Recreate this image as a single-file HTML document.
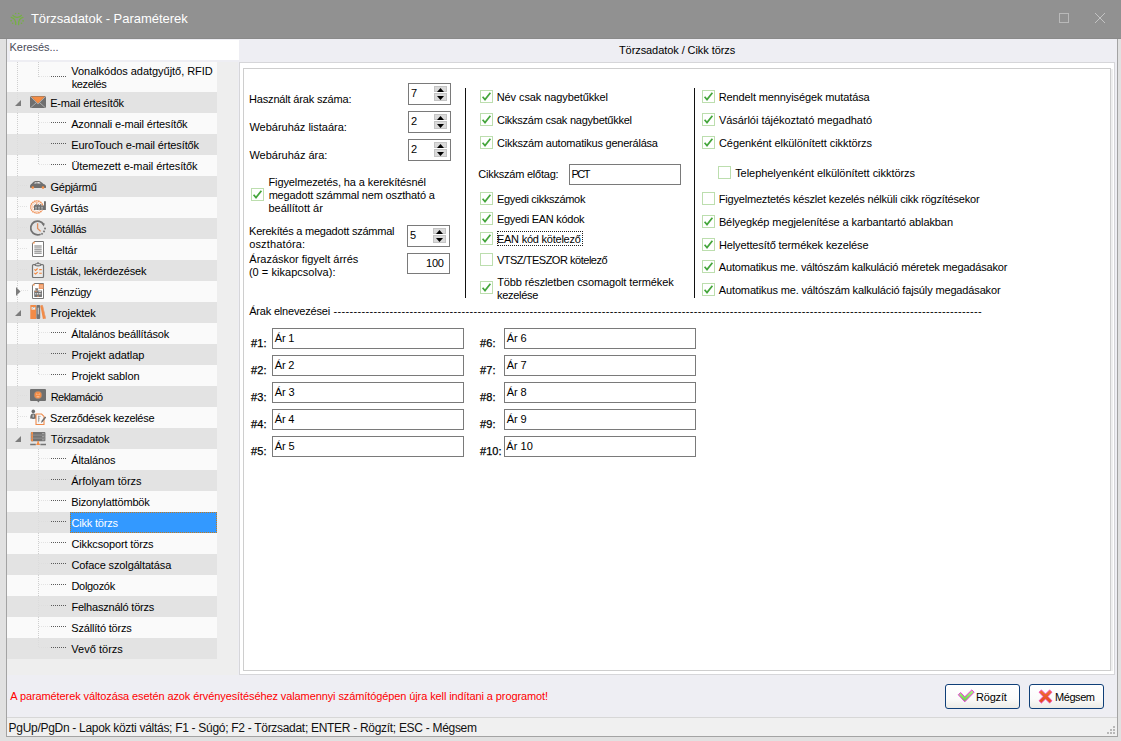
<!DOCTYPE html>
<html lang="hu"><head><meta charset="utf-8"><title>Törzsadatok - Paraméterek</title><style>
html,body{margin:0;padding:0}
body{width:1121px;height:741px;position:relative;overflow:hidden;background:#e1e1e1;font:11px/13px 'Liberation Sans', sans-serif;color:#000}
.a{position:absolute}
.t{white-space:nowrap}
.vd{width:1px;background:repeating-linear-gradient(180deg,var(--c) 0 1px,transparent 1px 2px)}
.hd{height:1px;background:repeating-linear-gradient(90deg,var(--c) 0 1px,transparent 1px 2px)}
</style></head><body>
<div class="a" style="left:0;top:0;width:1121px;height:39px;background:#919191"></div>
<div class="a" style="left:0;top:38px;width:1121px;height:1px;background:#8a8a8a"></div>
<div class="a" style="left:6px;top:39px;width:1112px;height:698px;background:#eeeef3;border:1px solid #a3a3a3;border-top:none;box-sizing:border-box"></div>
<svg class="a" style="left:8px;top:10px" width="18" height="18" viewBox="8 10 18 18"><g fill="none" stroke="#76b043" stroke-width="1.25" stroke-linecap="round"><path d="M12.9 15.3c2 2.6 6.4 2.6 8.5 0"/><path d="M11.2 17.4c3.6 0.8 4.6 3.2 4.5 7.1"/><path d="M23 17.4c-3.6 0.8-4.6 3.2-4.4 7.3"/></g><g fill="#76b043"><circle cx="15.6" cy="13.5" r="0.8"/><circle cx="18.7" cy="13.5" r="0.8"/><circle cx="11.1" cy="20.7" r="0.85"/><circle cx="12.6" cy="23.2" r="0.8"/><circle cx="23.1" cy="20.8" r="0.85"/><circle cx="21.5" cy="23.3" r="0.8"/></g></svg>
<div id="t1" class="a t " style="left:30.88px;top:10px;font-size:13px;line-height:18px;color:#fff;letter-spacing:-0.026px;">Törzsadatok - Paraméterek</div>
<div class="a" style="left:1059px;top:13px;width:10px;height:10px;border:1px solid #b9b9b9;box-sizing:border-box"></div>
<svg class="a" style="left:1095px;top:13px" width="10" height="10" viewBox="0 0 10 10"><path d="M0 0L10 10M10 0L0 10" stroke="#c3c3c3" stroke-width="1"/></svg>
<div class="a" style="left:10px;top:40px;width:229px;height:20px;background:#fff;"></div>
<div id="t2" class="a t " style="left:9.54px;top:41px;color:#4a4a58;letter-spacing:-0.045px;">Keresés...</div>
<div id="t3" class="a t " style="left:618.94px;top:44px;letter-spacing:-0.072px;">Törzsadatok / Cikk törzs</div>
<div class="a" style="left:7px;top:62px;width:231px;height:613px;background:#eeeeee;"></div>
<div class="a" style="left:7px;top:62px;width:210px;height:30px;background:#fafafa;"></div>
<div class="a vd" style="left:17px;top:62px;height:30px;--c:#cfcfcf"></div>
<div class="a vd" style="left:38px;top:62px;height:15px;--c:#cfcfcf"></div>
<div class="a hd" style="left:39px;top:76px;width:11px;--c:#e2e2e2"></div>
<div class="a hd" style="left:51px;top:76px;width:16px;--c:#5a5a5a"></div>
<div id="t4" class="a t " style="left:71.3px;top:65px;letter-spacing:-0.041px;">Vonalkódos adatgyűjtő, RFID</div>
<div id="t5" class="a t " style="left:71.71px;top:78px;letter-spacing:-0.366px;">kezelés</div>
<div class="a" style="left:7px;top:92px;width:210px;height:21px;background:#e3e3e3;"></div>
<div class="a vd" style="left:17px;top:92px;height:21px;--c:#dcdcdc"></div>
<svg class="a" style="left:15px;top:100px" width="6" height="6" viewBox="0 0 6 6"><path d="M6 0V6H0z" fill="#7c7c7c"/></svg>
<svg class="a" style="left:30px;top:94px" width="16" height="16" viewBox="0 0 16 16"><rect x="0" y="2" width="16" height="12" rx="1.5" fill="#6f6f6f"/><path d="M1.1 2.4h13.8L8 9.5z" fill="#f58d45"/><path d="M0.8 2.8l7.2 7.3L15.2 2.8M1 13.4l5.2-4.6M15 13.4l-5.2-4.6" stroke="#b9b9b9" stroke-width="0.8" fill="none"/></svg>
<div id="t6" class="a t " style="left:50.16px;top:97px;letter-spacing:-0.163px;">E-mail értesítők</div>
<div class="a" style="left:7px;top:113px;width:210px;height:21px;background:#fafafa;"></div>
<div class="a vd" style="left:17px;top:113px;height:21px;--c:#cfcfcf"></div>
<div class="a vd" style="left:38px;top:113px;height:21px;--c:#cfcfcf"></div>
<div class="a hd" style="left:39px;top:122px;width:11px;--c:#e2e2e2"></div>
<div class="a hd" style="left:51px;top:122px;width:16px;--c:#5a5a5a"></div>
<div id="t7" class="a t " style="left:71.21px;top:118px;letter-spacing:-0.168px;">Azonnali e-mail értesítők</div>
<div class="a" style="left:7px;top:134px;width:210px;height:21px;background:#e3e3e3;"></div>
<div class="a vd" style="left:17px;top:134px;height:21px;--c:#dcdcdc"></div>
<div class="a vd" style="left:38px;top:134px;height:21px;--c:#dcdcdc"></div>
<div class="a hd" style="left:39px;top:143px;width:11px;--c:#dedede"></div>
<div class="a hd" style="left:51px;top:143px;width:16px;--c:#5a5a5a"></div>
<div id="t8" class="a t " style="left:71.29px;top:139px;letter-spacing:-0.121px;">EuroTouch e-mail értesítők</div>
<div class="a" style="left:7px;top:155px;width:210px;height:21px;background:#fafafa;"></div>
<div class="a vd" style="left:17px;top:155px;height:21px;--c:#cfcfcf"></div>
<div class="a vd" style="left:38px;top:155px;height:10px;--c:#cfcfcf"></div>
<div class="a hd" style="left:39px;top:164px;width:11px;--c:#e2e2e2"></div>
<div class="a hd" style="left:51px;top:164px;width:16px;--c:#5a5a5a"></div>
<div id="t9" class="a t " style="left:71.45px;top:160px;letter-spacing:-0.088px;">Ütemezett e-mail értesítők</div>
<div class="a" style="left:7px;top:176px;width:210px;height:21px;background:#e3e3e3;"></div>
<div class="a vd" style="left:17px;top:176px;height:21px;--c:#dcdcdc"></div>
<div class="a hd" style="left:18px;top:185px;width:10px;--c:#dedede"></div>
<svg class="a" style="left:30px;top:178px" width="16" height="16" viewBox="0 0 16 16"><path d="M0 8.6C0 7 0.8 6.2 2 5.5 3 4.2 4.2 3 5.6 3H9c1.5 0 2.6 1.4 4.5 2.9 1.6 0.6 2.7 1.3 2.7 3.4 0 0.5-0.2 0.7-0.7 0.7H0.8C0.2 10 0 9.6 0 8.6z" fill="#6f6f6f"/><path d="M4 5.6C4.5 4.6 5.2 4.1 6.6 4v1.6zM7.3 4h1.5c0.8 0.1 1.3 0.8 1.9 1.6H7.3z" fill="#e6e6e6"/><circle cx="2.8" cy="9.6" r="1.3" fill="#f58d45"/><circle cx="13" cy="9.6" r="1.3" fill="#f58d45"/></svg>
<div id="t10" class="a t " style="left:50.57px;top:181px;letter-spacing:-0.299px;">Gépjármű</div>
<div class="a" style="left:7px;top:197px;width:210px;height:21px;background:#fafafa;"></div>
<div class="a vd" style="left:17px;top:197px;height:21px;--c:#cfcfcf"></div>
<div class="a hd" style="left:18px;top:206px;width:10px;--c:#e2e2e2"></div>
<svg class="a" style="left:30px;top:199px" width="16" height="16" viewBox="0 0 16 16"><circle cx="6.8" cy="8" r="6.1" fill="none" stroke="#f0935a" stroke-width="1.4" stroke-dasharray="1.6 0.5"/><circle cx="6.8" cy="8" r="4.6" fill="none" stroke="#f6c3a2" stroke-width="0.8"/><path d="M6.8 3.5v4.5H3" stroke="#f0935a" stroke-width="1" fill="none"/><path d="M4 11.1V6.6l2.4-1.8v1.8l2.4-1.8v1.8l2.4-1.8v1.8h2.8V2.3h1.9v8.8z" fill="#6f6f6f"/><path d="M5 8.3h2M8 8.3h2M11 8.3h2M5 10h2M8 10h2M11 10h2" stroke="#c4c4c4" stroke-width="0.8"/></svg>
<div id="t11" class="a t " style="left:50.57px;top:202px;letter-spacing:-0.098px;">Gyártás</div>
<div class="a" style="left:7px;top:218px;width:210px;height:21px;background:#e3e3e3;"></div>
<div class="a vd" style="left:17px;top:218px;height:21px;--c:#dcdcdc"></div>
<div class="a hd" style="left:18px;top:227px;width:10px;--c:#dedede"></div>
<svg class="a" style="left:30px;top:220px" width="16" height="16" viewBox="0 0 16 16"><path d="M13.6 4.4A6.9 6.9 0 1 0 10.6 14.2" fill="none" stroke="#727272" stroke-width="1.8"/><path d="M11.6 3.4l3.2 0.2-1 2.8z" fill="#727272"/><rect x="14.2" y="7.6" width="1.7" height="1.7" fill="#727272" transform="rotate(10 15 8.4)"/><rect x="13.2" y="10.6" width="1.7" height="1.7" fill="#727272" transform="rotate(25 14 11.4)"/><rect x="11.2" y="13" width="1.7" height="1.7" fill="#727272" transform="rotate(40 12 13.8)"/><path d="M7.6 3.2v5.2l3 3" stroke="#e08e5e" stroke-width="1.3" fill="none"/></svg>
<div id="t12" class="a t " style="left:50.88px;top:223px;letter-spacing:-0.223px;">Jótállás</div>
<div class="a" style="left:7px;top:239px;width:210px;height:21px;background:#fafafa;"></div>
<div class="a vd" style="left:17px;top:239px;height:21px;--c:#cfcfcf"></div>
<div class="a hd" style="left:18px;top:248px;width:10px;--c:#e2e2e2"></div>
<svg class="a" style="left:30px;top:241px" width="16" height="16" viewBox="0 0 16 16"><path d="M4.2 0.5h9.3v15h-11V2.2z" fill="#fff" stroke="#777" stroke-width="1"/><path d="M2.3 2.6L4.6 0.3v2.3z" fill="#f58d45"/><path d="M4.3 5h7.4M4.3 6.9h7.4M4.3 8.7h7.4M4.3 10.5h7.4M4.3 12.3h7.4" stroke="#a2a2a2" stroke-width="1.3"/></svg>
<div id="t13" class="a t " style="left:50.24px;top:244px;letter-spacing:-0.088px;">Leltár</div>
<div class="a" style="left:7px;top:260px;width:210px;height:21px;background:#e3e3e3;"></div>
<div class="a vd" style="left:17px;top:260px;height:21px;--c:#dcdcdc"></div>
<div class="a hd" style="left:18px;top:269px;width:10px;--c:#dedede"></div>
<svg class="a" style="left:30px;top:262px" width="16" height="16" viewBox="0 0 16 16"><rect x="2.5" y="2.6" width="11" height="12.9" rx="1" fill="#ececec" stroke="#747474" stroke-width="1.2"/><path d="M7 1.5c0-1.2 2-1.2 2 0" fill="none" stroke="#747474" stroke-width="1"/><ellipse cx="8" cy="2.7" rx="2.9" ry="1.15" fill="#e4e4e4" stroke="#747474" stroke-width="1.1"/><path d="M4.4 7.4l1.2 1.1 2-2M4.4 11l1.2 1.1 2-2" stroke="#f0823a" stroke-width="1.1" fill="none"/><path d="M9.2 7.6h2.6M9.2 11.2h2.6" stroke="#f0823a" stroke-width="1.1"/></svg>
<div id="t14" class="a t " style="left:50.24px;top:265px;letter-spacing:-0.177px;">Listák, lekérdezések</div>
<div class="a" style="left:7px;top:281px;width:210px;height:21px;background:#fafafa;"></div>
<div class="a vd" style="left:17px;top:281px;height:21px;--c:#cfcfcf"></div>
<div class="a hd" style="left:21px;top:290px;width:7px;--c:#e2e2e2"></div>
<svg class="a" style="left:16px;top:287px" width="5" height="9" viewBox="0 0 5 9"><path d="M0 0L4.5 4.5 0 9z" fill="#7c7c7c"/></svg>
<svg class="a" style="left:30px;top:283px" width="16" height="16" viewBox="0 0 16 16"><path d="M4.2 0.5h9.3v15h-11V2.2z" fill="#fff" stroke="#777" stroke-width="1"/><path d="M2.3 2.6L4.6 0.3v2.3z" fill="#f58d45"/><rect x="8.8" y="0.9" width="4.8" height="5" fill="#f0935a"/><path d="M10.2 1.9v3M11.3 1.9v3M12.4 1.9v3" stroke="#fbd3b8" stroke-width="0.5"/><path d="M5 5.2h3.4l-0.7 2.2H5.8z" fill="#777"/><rect x="4.2" y="7.4" width="7.8" height="6.6" rx="0.4" fill="#757575"/><path d="M4.8 8.3h2.4" stroke="#f0935a" stroke-width="0.8"/><path d="M8.6 8.3h2.6" stroke="#eee" stroke-width="0.9"/><path d="M5.2 10.8h1.1M7 10.8h1.1M8.8 10.8h1.1M10.4 10.8h0.8" stroke="#ddd" stroke-width="1.6"/><path d="M7 13.2h2" stroke="#f0935a" stroke-width="0.8"/></svg>
<div id="t15" class="a t " style="left:50.66px;top:286px;letter-spacing:-0.338px;">Pénzügy</div>
<div class="a" style="left:7px;top:302px;width:210px;height:21px;background:#e3e3e3;"></div>
<div class="a vd" style="left:17px;top:302px;height:21px;--c:#dcdcdc"></div>
<svg class="a" style="left:15px;top:310px" width="6" height="6" viewBox="0 0 6 6"><path d="M6 0V6H0z" fill="#7c7c7c"/></svg>
<svg class="a" style="left:30px;top:304px" width="16" height="16" viewBox="0 0 16 16"><rect x="0.3" y="1" width="6" height="14" rx="0.6" fill="#f28b47"/><rect x="1.6" y="3" width="3.6" height="2.6" fill="#f4f4f4"/><path d="M2.2 4.4l1-0.8h1.4" stroke="#888" stroke-width="0.7" fill="none"/><rect x="6.4" y="1" width="3.8" height="14" rx="1" fill="#737373"/><rect x="7.7" y="3.4" width="1.2" height="7" rx="0.6" fill="#c9c9c9"/><path d="M10.3 1.4l2.3-0.4 3.2 13.6-2.9 0.5z" fill="#f28b47"/><path d="M12.3 1l0.5-0.1 3.2 13.6-0.6 0.2z" fill="#d9a283"/></svg>
<div id="t16" class="a t " style="left:50.66px;top:307px;letter-spacing:-0.08px;">Projektek</div>
<div class="a" style="left:7px;top:323px;width:210px;height:21px;background:#fafafa;"></div>
<div class="a vd" style="left:17px;top:323px;height:21px;--c:#cfcfcf"></div>
<div class="a vd" style="left:38px;top:323px;height:21px;--c:#cfcfcf"></div>
<div class="a hd" style="left:39px;top:332px;width:11px;--c:#e2e2e2"></div>
<div class="a hd" style="left:51px;top:332px;width:16px;--c:#5a5a5a"></div>
<div id="t17" class="a t " style="left:71.21px;top:328px;letter-spacing:-0.142px;">Általános beállítások</div>
<div class="a" style="left:7px;top:344px;width:210px;height:21px;background:#e3e3e3;"></div>
<div class="a vd" style="left:17px;top:344px;height:21px;--c:#dcdcdc"></div>
<div class="a vd" style="left:38px;top:344px;height:21px;--c:#dcdcdc"></div>
<div class="a hd" style="left:39px;top:353px;width:11px;--c:#dedede"></div>
<div class="a hd" style="left:51px;top:353px;width:16px;--c:#5a5a5a"></div>
<div id="t18" class="a t " style="left:71.44px;top:349px;letter-spacing:-0.024px;">Projekt adatlap</div>
<div class="a" style="left:7px;top:365px;width:210px;height:21px;background:#fafafa;"></div>
<div class="a vd" style="left:17px;top:365px;height:21px;--c:#cfcfcf"></div>
<div class="a vd" style="left:38px;top:365px;height:10px;--c:#cfcfcf"></div>
<div class="a hd" style="left:39px;top:374px;width:11px;--c:#e2e2e2"></div>
<div class="a hd" style="left:51px;top:374px;width:16px;--c:#5a5a5a"></div>
<div id="t19" class="a t " style="left:71.44px;top:370px;letter-spacing:-0.125px;">Projekt sablon</div>
<div class="a" style="left:7px;top:386px;width:210px;height:21px;background:#e3e3e3;"></div>
<div class="a vd" style="left:17px;top:386px;height:21px;--c:#dcdcdc"></div>
<div class="a hd" style="left:18px;top:395px;width:10px;--c:#dedede"></div>
<svg class="a" style="left:30px;top:388px" width="16" height="16" viewBox="0 0 16 16"><path d="M1 1h14a1 1 0 0 1 1 1v10a1 1 0 0 1-1 1H9.6L8.4 14.6 7.2 13H1a1 1 0 0 1-1-1V2a1 1 0 0 1 1-1z" fill="#6f6f6f"/><circle cx="8" cy="7" r="3.8" fill="#f58d45" stroke="#8a8a8a" stroke-width="0.5"/><path d="M6.2 6l1.2 0.5M9.8 6l-1.2 0.5M6.6 8.8h2.8" stroke="#fbe3d2" stroke-width="0.7"/></svg>
<div id="t20" class="a t " style="left:50.66px;top:391px;letter-spacing:-0.543px;">Reklamáció</div>
<div class="a" style="left:7px;top:407px;width:210px;height:21px;background:#fafafa;"></div>
<div class="a vd" style="left:17px;top:407px;height:21px;--c:#cfcfcf"></div>
<div class="a hd" style="left:18px;top:416px;width:10px;--c:#e2e2e2"></div>
<svg class="a" style="left:30px;top:409px" width="16" height="16" viewBox="0 0 16 16"><circle cx="3.3" cy="2.4" r="1.8" fill="#6c6c6c"/><path d="M0.2 9c0-3 1.2-4.4 3.1-4.4s3.1 1.4 3.1 4.4c0 0.6-0.8 0.9-3.1 0.9s-3.1-0.3-3.1-0.9z" fill="#6c6c6c"/><path d="M2.5 5.6h1.6v2.8H2.5z" fill="#bdbdbd"/><path d="M6 5h5.6L14 7.4V15.6H6z" fill="#f7f7f7" stroke="#ef8b4c" stroke-width="1.1"/><path d="M8 7.4h2.6M8 9.2h2M8 11h1.6M8.6 6.8v6.4" stroke="#9a9a9a" stroke-width="0.8"/><path d="M11 14l0.6-2.2 3.4-4.4 1.2 1-3.4 4.4z" fill="#6f6f6f"/></svg>
<div id="t21" class="a t " style="left:50.04px;top:412px;letter-spacing:-0.294px;">Szerződések kezelése</div>
<div class="a" style="left:7px;top:428px;width:210px;height:21px;background:#e3e3e3;"></div>
<svg class="a" style="left:15px;top:436px" width="6" height="6" viewBox="0 0 6 6"><path d="M6 0V6H0z" fill="#7c7c7c"/></svg>
<svg class="a" style="left:30px;top:430px" width="16" height="16" viewBox="0 0 16 16"><g transform="translate(0 0.9)"><rect x="0.8" y="1.2" width="14.6" height="9.2" rx="0.8" fill="#737373"/><rect x="1.2" y="1.2" width="1.8" height="9.2" fill="#f58d45"/><path d="M0.8 4.2h14.6M0.8 7.3h14.6" stroke="#9d9d9d" stroke-width="0.7"/><path d="M12 2.7h2.4M12 5.8h2.4M12 8.9h2.4" stroke="#a8a8a8" stroke-width="1"/><path d="M7.3 10.4h1.6v1.4l1.3 2.2H6l1.3-2.2z" fill="#f58d45"/><path d="M0.2 13.6h5.6M10.4 13.6h5.6" stroke="#737373" stroke-width="1.3"/></g></svg>
<div id="t22" class="a t " style="left:50.79px;top:433px;letter-spacing:-0.187px;">Törzsadatok</div>
<div class="a" style="left:7px;top:449px;width:210px;height:21px;background:#fafafa;"></div>
<div class="a vd" style="left:38px;top:449px;height:21px;--c:#cfcfcf"></div>
<div class="a hd" style="left:39px;top:458px;width:11px;--c:#e2e2e2"></div>
<div class="a hd" style="left:51px;top:458px;width:16px;--c:#5a5a5a"></div>
<div id="t23" class="a t " style="left:71.21px;top:454px;letter-spacing:-0.116px;">Általános</div>
<div class="a" style="left:7px;top:470px;width:210px;height:21px;background:#e3e3e3;"></div>
<div class="a vd" style="left:38px;top:470px;height:21px;--c:#dcdcdc"></div>
<div class="a hd" style="left:39px;top:479px;width:11px;--c:#dedede"></div>
<div class="a hd" style="left:51px;top:479px;width:16px;--c:#5a5a5a"></div>
<div id="t24" class="a t " style="left:71.21px;top:475px;letter-spacing:0.006px;">Árfolyam törzs</div>
<div class="a" style="left:7px;top:491px;width:210px;height:21px;background:#fafafa;"></div>
<div class="a vd" style="left:38px;top:491px;height:21px;--c:#cfcfcf"></div>
<div class="a hd" style="left:39px;top:500px;width:11px;--c:#e2e2e2"></div>
<div class="a hd" style="left:51px;top:500px;width:16px;--c:#5a5a5a"></div>
<div id="t25" class="a t " style="left:71.29px;top:496px;letter-spacing:-0.154px;">Bizonylattömbök</div>
<div class="a" style="left:7px;top:512px;width:210px;height:21px;background:#e3e3e3;"></div>
<div class="a vd" style="left:38px;top:512px;height:21px;--c:#dcdcdc"></div>
<div class="a hd" style="left:39px;top:521px;width:11px;--c:#dedede"></div>
<div class="a hd" style="left:51px;top:521px;width:16px;--c:#5a5a5a"></div>
<div class="a" style="left:70px;top:512px;width:147px;height:21px;background:#3399ff;border:1px dotted #c47a1a;box-sizing:border-box"></div>
<div id="t26" class="a t " style="left:71.53px;top:517px;color:#fff;letter-spacing:-0.206px;">Cikk törzs</div>
<div class="a" style="left:7px;top:533px;width:210px;height:21px;background:#fafafa;"></div>
<div class="a vd" style="left:38px;top:533px;height:21px;--c:#cfcfcf"></div>
<div class="a hd" style="left:39px;top:542px;width:11px;--c:#e2e2e2"></div>
<div class="a hd" style="left:51px;top:542px;width:16px;--c:#5a5a5a"></div>
<div id="t27" class="a t " style="left:71.53px;top:538px;letter-spacing:-0.145px;">Cikkcsoport törzs</div>
<div class="a" style="left:7px;top:554px;width:210px;height:21px;background:#e3e3e3;"></div>
<div class="a vd" style="left:38px;top:554px;height:21px;--c:#dcdcdc"></div>
<div class="a hd" style="left:39px;top:563px;width:11px;--c:#dedede"></div>
<div class="a hd" style="left:51px;top:563px;width:16px;--c:#5a5a5a"></div>
<div id="t28" class="a t " style="left:71.53px;top:559px;letter-spacing:-0.123px;">Coface szolgáltatása</div>
<div class="a" style="left:7px;top:575px;width:210px;height:21px;background:#fafafa;"></div>
<div class="a vd" style="left:38px;top:575px;height:21px;--c:#cfcfcf"></div>
<div class="a hd" style="left:39px;top:584px;width:11px;--c:#e2e2e2"></div>
<div class="a hd" style="left:51px;top:584px;width:16px;--c:#5a5a5a"></div>
<div id="t29" class="a t " style="left:71.49px;top:580px;letter-spacing:-0.314px;">Dolgozók</div>
<div class="a" style="left:7px;top:596px;width:210px;height:21px;background:#e3e3e3;"></div>
<div class="a vd" style="left:38px;top:596px;height:21px;--c:#dcdcdc"></div>
<div class="a hd" style="left:39px;top:605px;width:11px;--c:#dedede"></div>
<div class="a hd" style="left:51px;top:605px;width:16px;--c:#5a5a5a"></div>
<div id="t30" class="a t " style="left:71.44px;top:601px;letter-spacing:-0.205px;">Felhasználó törzs</div>
<div class="a" style="left:7px;top:617px;width:210px;height:21px;background:#fafafa;"></div>
<div class="a vd" style="left:38px;top:617px;height:21px;--c:#cfcfcf"></div>
<div class="a hd" style="left:39px;top:626px;width:11px;--c:#e2e2e2"></div>
<div class="a hd" style="left:51px;top:626px;width:16px;--c:#5a5a5a"></div>
<div id="t31" class="a t " style="left:71.3px;top:622px;letter-spacing:-0.186px;">Szállító törzs</div>
<div class="a" style="left:7px;top:638px;width:210px;height:21px;background:#e3e3e3;"></div>
<div class="a vd" style="left:38px;top:638px;height:10px;--c:#dcdcdc"></div>
<div class="a hd" style="left:39px;top:647px;width:11px;--c:#dedede"></div>
<div class="a hd" style="left:51px;top:647px;width:16px;--c:#5a5a5a"></div>
<div id="t32" class="a t " style="left:71.3px;top:643px;letter-spacing:0.02px;">Vevő törzs</div>
<div class="a" style="left:239px;top:62px;width:876px;height:613px;background:#fff;border:1px solid #d6d6d9;box-sizing:border-box;"></div>
<div class="a" style="left:243px;top:68px;width:868px;height:603px;background:#fff;border:1px solid #cecece;box-sizing:border-box;"></div>
<div class="a" style="left:1111px;top:69px;width:2px;height:602px;background:#efefef;"></div>
<div id="t33" class="a t " style="left:249.04px;top:93px;letter-spacing:-0.175px;">Használt árak száma:</div>
<div id="t34" class="a t " style="left:249.39px;top:121px;letter-spacing:-0.009px;">Webáruház listaára:</div>
<div id="t35" class="a t " style="left:249.39px;top:149px;letter-spacing:-0.003px;">Webáruház ára:</div>
<div class="a" style="left:408px;top:83px;width:43px;height:22px;background:#fff;border:1px solid #7a7a7a;box-sizing:border-box;"></div>
<div id="t36" class="a t " style="left:411px;top:87px;">7</div>
<div class="a" style="left:434px;top:86px;width:13px;height:6px;background:#dadada;border:1px solid #c4c4c4;box-sizing:border-box"></div>
<div class="a" style="left:434px;top:93px;width:13px;height:8px;background:#dadada;border:1px solid #c4c4c4;box-sizing:border-box"></div>
<svg class="a" style="left:437px;top:88px" width="7" height="4" viewBox="0 0 7 4"><path d="M0 4L3.5 0 7 4z" fill="#000"/></svg>
<svg class="a" style="left:437px;top:96px" width="7" height="4" viewBox="0 0 7 4"><path d="M0 0L3.5 4 7 0z" fill="#000"/></svg>
<div class="a" style="left:408px;top:111px;width:43px;height:22px;background:#fff;border:1px solid #7a7a7a;box-sizing:border-box;"></div>
<div id="t37" class="a t " style="left:411px;top:115px;">2</div>
<div class="a" style="left:434px;top:114px;width:13px;height:6px;background:#dadada;border:1px solid #c4c4c4;box-sizing:border-box"></div>
<div class="a" style="left:434px;top:121px;width:13px;height:8px;background:#dadada;border:1px solid #c4c4c4;box-sizing:border-box"></div>
<svg class="a" style="left:437px;top:116px" width="7" height="4" viewBox="0 0 7 4"><path d="M0 4L3.5 0 7 4z" fill="#000"/></svg>
<svg class="a" style="left:437px;top:124px" width="7" height="4" viewBox="0 0 7 4"><path d="M0 0L3.5 4 7 0z" fill="#000"/></svg>
<div class="a" style="left:408px;top:139px;width:43px;height:22px;background:#fff;border:1px solid #7a7a7a;box-sizing:border-box;"></div>
<div id="t38" class="a t " style="left:411px;top:143px;">2</div>
<div class="a" style="left:434px;top:142px;width:13px;height:6px;background:#dadada;border:1px solid #c4c4c4;box-sizing:border-box"></div>
<div class="a" style="left:434px;top:149px;width:13px;height:8px;background:#dadada;border:1px solid #c4c4c4;box-sizing:border-box"></div>
<svg class="a" style="left:437px;top:144px" width="7" height="4" viewBox="0 0 7 4"><path d="M0 4L3.5 0 7 4z" fill="#000"/></svg>
<svg class="a" style="left:437px;top:152px" width="7" height="4" viewBox="0 0 7 4"><path d="M0 0L3.5 4 7 0z" fill="#000"/></svg>
<div class="a" style="left:251px;top:188px;width:13px;height:13px;background:#fff;border:1px solid #bcdeae;box-sizing:border-box"></div>
<svg class="a" style="left:251px;top:188px" width="13" height="13" viewBox="0 0 13 13"><path d="M2.6 6.8L5 9.6 10.4 2.8" stroke="#44a53b" stroke-width="1.7" fill="none"/></svg>
<div id="t39" class="a t " style="left:268.44px;top:176px;letter-spacing:-0.108px;">Figyelmezetés, ha a kerekítésnél</div>
<div id="t40" class="a t " style="left:268.63px;top:189px;letter-spacing:-0.165px;">megadott számmal nem osztható a</div>
<div id="t41" class="a t " style="left:268.51px;top:202px;letter-spacing:-0.007px;">beállított ár</div>
<div id="t42" class="a t " style="left:249.04px;top:225px;letter-spacing:-0.227px;">Kerekítés a megadott számmal</div>
<div id="t43" class="a t " style="left:249.18px;top:238px;letter-spacing:0.153px;">oszthatóra:</div>
<div class="a" style="left:407px;top:225px;width:43px;height:22px;background:#fff;border:1px solid #7a7a7a;box-sizing:border-box;"></div>
<div id="t44" class="a t " style="left:410px;top:229px;">5</div>
<div class="a" style="left:433px;top:228px;width:13px;height:6px;background:#dadada;border:1px solid #c4c4c4;box-sizing:border-box"></div>
<div class="a" style="left:433px;top:235px;width:13px;height:8px;background:#dadada;border:1px solid #c4c4c4;box-sizing:border-box"></div>
<svg class="a" style="left:436px;top:230px" width="7" height="4" viewBox="0 0 7 4"><path d="M0 4L3.5 0 7 4z" fill="#000"/></svg>
<svg class="a" style="left:436px;top:238px" width="7" height="4" viewBox="0 0 7 4"><path d="M0 0L3.5 4 7 0z" fill="#000"/></svg>
<div id="t45" class="a t " style="left:249.36px;top:253px;letter-spacing:-0.021px;">Árazáskor figyelt árrés</div>
<div id="t46" class="a t " style="left:248.93px;top:266px;letter-spacing:0.038px;">(0 = kikapcsolva):</div>
<div class="a" style="left:407px;top:253px;width:43px;height:21px;background:#fff;border:1px solid #7a7a7a;box-sizing:border-box;"></div>
<div id="t47" class="a t " style="left:426.0px;top:257px;letter-spacing:-0.201px;">100</div>
<div class="a" style="left:465px;top:88px;width:1px;height:210px;background:#111;"></div>
<div class="a" style="left:694px;top:88px;width:1px;height:210px;background:#111;"></div>
<div class="a" style="left:480px;top:90px;width:13px;height:13px;background:#fff;border:1px solid #bcdeae;box-sizing:border-box"></div>
<svg class="a" style="left:480px;top:90px" width="13" height="13" viewBox="0 0 13 13"><path d="M2.6 6.8L5 9.6 10.4 2.8" stroke="#44a53b" stroke-width="1.7" fill="none"/></svg>
<div id="t48" class="a t " style="left:496.73px;top:91px;letter-spacing:-0.092px;">Név csak nagybetűkkel</div>
<div class="a" style="left:480px;top:113px;width:13px;height:13px;background:#fff;border:1px solid #bcdeae;box-sizing:border-box"></div>
<svg class="a" style="left:480px;top:113px" width="13" height="13" viewBox="0 0 13 13"><path d="M2.6 6.8L5 9.6 10.4 2.8" stroke="#44a53b" stroke-width="1.7" fill="none"/></svg>
<div id="t49" class="a t " style="left:496.98px;top:114px;letter-spacing:-0.248px;">Cikkszám csak nagybetűkkel</div>
<div class="a" style="left:480px;top:136px;width:13px;height:13px;background:#fff;border:1px solid #bcdeae;box-sizing:border-box"></div>
<svg class="a" style="left:480px;top:136px" width="13" height="13" viewBox="0 0 13 13"><path d="M2.6 6.8L5 9.6 10.4 2.8" stroke="#44a53b" stroke-width="1.7" fill="none"/></svg>
<div id="t50" class="a t " style="left:496.98px;top:137px;letter-spacing:-0.217px;">Cikkszám automatikus generálása</div>
<div id="t51" class="a t " style="left:478.35px;top:168px;letter-spacing:-0.232px;">Cikkszám előtag:</div>
<div class="a" style="left:569px;top:164px;width:112px;height:21px;background:#fff;border:1px solid #7a7a7a;box-sizing:border-box;"></div>
<div id="t52" class="a t " style="left:571.44px;top:168px;letter-spacing:-1.445px;">PCT</div>
<div class="a" style="left:480px;top:192px;width:13px;height:13px;background:#fff;border:1px solid #bcdeae;box-sizing:border-box"></div>
<svg class="a" style="left:480px;top:192px" width="13" height="13" viewBox="0 0 13 13"><path d="M2.6 6.8L5 9.6 10.4 2.8" stroke="#44a53b" stroke-width="1.7" fill="none"/></svg>
<div id="t53" class="a t " style="left:496.88px;top:193px;letter-spacing:-0.313px;">Egyedi cikkszámok</div>
<div class="a" style="left:480px;top:212px;width:13px;height:13px;background:#fff;border:1px solid #bcdeae;box-sizing:border-box"></div>
<svg class="a" style="left:480px;top:212px" width="13" height="13" viewBox="0 0 13 13"><path d="M2.6 6.8L5 9.6 10.4 2.8" stroke="#44a53b" stroke-width="1.7" fill="none"/></svg>
<div id="t54" class="a t " style="left:496.88px;top:213px;letter-spacing:-0.269px;">Egyedi EAN kódok</div>
<div class="a" style="left:480px;top:232px;width:13px;height:13px;background:#fff;border:1px solid #bcdeae;box-sizing:border-box"></div>
<svg class="a" style="left:480px;top:232px" width="13" height="13" viewBox="0 0 13 13"><path d="M2.6 6.8L5 9.6 10.4 2.8" stroke="#44a53b" stroke-width="1.7" fill="none"/></svg>
<div id="t55" class="a t " style="left:496.88px;top:233px;letter-spacing:-0.227px;">EAN kód kötelező</div>
<div class="a" style="left:480px;top:253px;width:13px;height:13px;background:#fff;border:1px solid #bcdeae;box-sizing:border-box"></div>
<div id="t56" class="a t " style="left:496.88px;top:254px;letter-spacing:-0.476px;">VTSZ/TESZOR kötelező</div>
<div class="a" style="left:497px;top:231px;width:86px;height:15px;border:1px dotted #222;box-sizing:border-box"></div>
<div class="a" style="left:480px;top:281px;width:13px;height:13px;background:#fff;border:1px solid #bcdeae;box-sizing:border-box"></div>
<svg class="a" style="left:480px;top:281px" width="13" height="13" viewBox="0 0 13 13"><path d="M2.6 6.8L5 9.6 10.4 2.8" stroke="#44a53b" stroke-width="1.7" fill="none"/></svg>
<div id="t57" class="a t " style="left:497.17px;top:276px;letter-spacing:-0.117px;">Több részletben csomagolt termékek</div>
<div id="t58" class="a t " style="left:497.01px;top:289px;letter-spacing:-0.297px;">kezelése</div>
<div class="a" style="left:702px;top:90px;width:13px;height:13px;background:#fff;border:1px solid #bcdeae;box-sizing:border-box"></div>
<svg class="a" style="left:702px;top:90px" width="13" height="13" viewBox="0 0 13 13"><path d="M2.6 6.8L5 9.6 10.4 2.8" stroke="#44a53b" stroke-width="1.7" fill="none"/></svg>
<div id="t59" class="a t " style="left:718.8px;top:91px;letter-spacing:-0.118px;">Rendelt mennyiségek mutatása</div>
<div class="a" style="left:702px;top:113px;width:13px;height:13px;background:#fff;border:1px solid #bcdeae;box-sizing:border-box"></div>
<svg class="a" style="left:702px;top:113px" width="13" height="13" viewBox="0 0 13 13"><path d="M2.6 6.8L5 9.6 10.4 2.8" stroke="#44a53b" stroke-width="1.7" fill="none"/></svg>
<div id="t60" class="a t " style="left:718.88px;top:114px;letter-spacing:-0.032px;">Vásárlói tájékoztató megadható</div>
<div class="a" style="left:702px;top:136px;width:13px;height:13px;background:#fff;border:1px solid #bcdeae;box-sizing:border-box"></div>
<svg class="a" style="left:702px;top:136px" width="13" height="13" viewBox="0 0 13 13"><path d="M2.6 6.8L5 9.6 10.4 2.8" stroke="#44a53b" stroke-width="1.7" fill="none"/></svg>
<div id="t61" class="a t " style="left:718.98px;top:137px;letter-spacing:-0.075px;">Cégenként elkülönített cikktörzs</div>
<div class="a" style="left:718px;top:166px;width:13px;height:13px;background:#fff;border:1px solid #bcdeae;box-sizing:border-box"></div>
<div id="t62" class="a t " style="left:735.17px;top:167px;letter-spacing:-0.046px;">Telephelyenként elkülönített cikktörzs</div>
<div class="a" style="left:702px;top:192px;width:13px;height:13px;background:#fff;border:1px solid #bcdeae;box-sizing:border-box"></div>
<div id="t63" class="a t " style="left:718.8px;top:193px;letter-spacing:-0.194px;">Figyelmeztetés készlet kezelés nélküli cikk rögzítésekor</div>
<div class="a" style="left:702px;top:215px;width:13px;height:13px;background:#fff;border:1px solid #bcdeae;box-sizing:border-box"></div>
<svg class="a" style="left:702px;top:215px" width="13" height="13" viewBox="0 0 13 13"><path d="M2.6 6.8L5 9.6 10.4 2.8" stroke="#44a53b" stroke-width="1.7" fill="none"/></svg>
<div id="t64" class="a t " style="left:718.88px;top:216px;letter-spacing:-0.097px;">Bélyegkép megjelenítése a karbantartó ablakban</div>
<div class="a" style="left:702px;top:238px;width:13px;height:13px;background:#fff;border:1px solid #bcdeae;box-sizing:border-box"></div>
<svg class="a" style="left:702px;top:238px" width="13" height="13" viewBox="0 0 13 13"><path d="M2.6 6.8L5 9.6 10.4 2.8" stroke="#44a53b" stroke-width="1.7" fill="none"/></svg>
<div id="t65" class="a t " style="left:718.9px;top:239px;letter-spacing:-0.111px;">Helyettesítő termékek kezelése</div>
<div class="a" style="left:702px;top:260px;width:13px;height:13px;background:#fff;border:1px solid #bcdeae;box-sizing:border-box"></div>
<svg class="a" style="left:702px;top:260px" width="13" height="13" viewBox="0 0 13 13"><path d="M2.6 6.8L5 9.6 10.4 2.8" stroke="#44a53b" stroke-width="1.7" fill="none"/></svg>
<div id="t66" class="a t " style="left:718.84px;top:261px;letter-spacing:-0.178px;">Automatikus me. váltószám kalkuláció méretek megadásakor</div>
<div class="a" style="left:702px;top:283px;width:13px;height:13px;background:#fff;border:1px solid #bcdeae;box-sizing:border-box"></div>
<svg class="a" style="left:702px;top:283px" width="13" height="13" viewBox="0 0 13 13"><path d="M2.6 6.8L5 9.6 10.4 2.8" stroke="#44a53b" stroke-width="1.7" fill="none"/></svg>
<div id="t67" class="a t " style="left:718.84px;top:284px;letter-spacing:-0.146px;">Automatikus me. váltószám kalkuláció fajsúly megadásakor</div>
<div id="t68" class="a t " style="left:249.21px;top:305px;letter-spacing:-0.188px;">Árak elnevezései</div>
<div id="t69" class="a t " style="left:333.38px;top:305px;letter-spacing:0.341px;">------------------------------------------------------------------------------------------------------------------------------------------------------------------</div>
<div id="t70" class="a t " style="left:251.05px;top:337px;letter-spacing:0.159px;-webkit-text-stroke:0.25px;">#1:</div>
<div class="a" style="left:272px;top:328px;width:192px;height:21px;background:#fff;border:1px solid #7a7a7a;box-sizing:border-box;"></div>
<div id="t71" class="a t " style="left:274.76px;top:332px;letter-spacing:-0.153px;">Ár 1</div>
<div id="t72" class="a t " style="left:480.05px;top:337px;letter-spacing:0.115px;-webkit-text-stroke:0.25px;">#6:</div>
<div class="a" style="left:504px;top:328px;width:192px;height:21px;background:#fff;border:1px solid #7a7a7a;box-sizing:border-box;"></div>
<div id="t73" class="a t " style="left:506.76px;top:332px;letter-spacing:-0.1px;">Ár 6</div>
<div id="t74" class="a t " style="left:251.05px;top:364px;letter-spacing:0.144px;-webkit-text-stroke:0.25px;">#2:</div>
<div class="a" style="left:272px;top:355px;width:192px;height:21px;background:#fff;border:1px solid #7a7a7a;box-sizing:border-box;"></div>
<div id="t75" class="a t " style="left:274.76px;top:359px;letter-spacing:-0.153px;">Ár 2</div>
<div id="t76" class="a t " style="left:480.05px;top:364px;letter-spacing:0.162px;-webkit-text-stroke:0.25px;">#7:</div>
<div class="a" style="left:504px;top:355px;width:192px;height:21px;background:#fff;border:1px solid #7a7a7a;box-sizing:border-box;"></div>
<div id="t77" class="a t " style="left:506.76px;top:359px;letter-spacing:-0.069px;">Ár 7</div>
<div id="t78" class="a t " style="left:251.05px;top:391px;letter-spacing:0.118px;-webkit-text-stroke:0.25px;">#3:</div>
<div class="a" style="left:272px;top:382px;width:192px;height:21px;background:#fff;border:1px solid #7a7a7a;box-sizing:border-box;"></div>
<div id="t79" class="a t " style="left:274.76px;top:386px;letter-spacing:-0.111px;">Ár 3</div>
<div id="t80" class="a t " style="left:480.05px;top:391px;letter-spacing:0.117px;-webkit-text-stroke:0.25px;">#8:</div>
<div class="a" style="left:504px;top:382px;width:192px;height:21px;background:#fff;border:1px solid #7a7a7a;box-sizing:border-box;"></div>
<div id="t81" class="a t " style="left:506.76px;top:386px;letter-spacing:-0.1px;">Ár 8</div>
<div id="t82" class="a t " style="left:251.05px;top:418px;letter-spacing:0.151px;-webkit-text-stroke:0.25px;">#4:</div>
<div class="a" style="left:272px;top:409px;width:192px;height:21px;background:#fff;border:1px solid #7a7a7a;box-sizing:border-box;"></div>
<div id="t83" class="a t " style="left:274.76px;top:413px;letter-spacing:-0.147px;">Ár 4</div>
<div id="t84" class="a t " style="left:480.05px;top:418px;letter-spacing:0.141px;-webkit-text-stroke:0.25px;">#9:</div>
<div class="a" style="left:504px;top:409px;width:192px;height:21px;background:#fff;border:1px solid #7a7a7a;box-sizing:border-box;"></div>
<div id="t85" class="a t " style="left:506.76px;top:413px;letter-spacing:-0.1px;">Ár 9</div>
<div id="t86" class="a t " style="left:251.05px;top:445px;letter-spacing:0.131px;-webkit-text-stroke:0.25px;">#5:</div>
<div class="a" style="left:272px;top:436px;width:192px;height:21px;background:#fff;border:1px solid #7a7a7a;box-sizing:border-box;"></div>
<div id="t87" class="a t " style="left:274.76px;top:440px;letter-spacing:-0.143px;">Ár 5</div>
<div id="t88" class="a t " style="left:480.05px;top:445px;letter-spacing:0.025px;-webkit-text-stroke:0.25px;">#10:</div>
<div class="a" style="left:504px;top:436px;width:192px;height:21px;background:#fff;border:1px solid #7a7a7a;box-sizing:border-box;"></div>
<div id="t89" class="a t " style="left:506.21px;top:440px;letter-spacing:0.119px;">Ár 10</div>
<div id="t90" class="a t " style="left:10.34px;top:690px;color:#ff0000;letter-spacing:-0.1px;">A paraméterek változása esetén azok érvényesítéséhez valamennyi számítógépen újra kell indítani a programot!</div>
<div class="a" style="left:945px;top:684px;width:75px;height:25px;border:1px solid #0f3f78;border-radius:3px;box-sizing:border-box;background:linear-gradient(#ffffff,#fbfbfa 60%,#ecebe6)"></div>
<svg class="a" style="left:955px;top:686px" width="22" height="20" viewBox="955 686 22 20"><defs><linearGradient id="gg" x1="0" y1="0" x2="0" y2="1"><stop offset="0" stop-color="#b4f58a"/><stop offset="1" stop-color="#5fd243"/></linearGradient></defs><path d="M958.3 694.8L960.6 692.5 964.8 696.8 971.8 689.9 974.1 692.2 964.8 701.8z" fill="url(#gg)" stroke="#f21fe0" stroke-width="0.9" stroke-linejoin="round"/></svg>
<div id="t91" class="a t " style="left:975.92px;top:691px;letter-spacing:-0.16px;">Rögzít</div>
<div class="a" style="left:1029px;top:684px;width:75px;height:25px;border:1px solid #0f3f78;border-radius:3px;box-sizing:border-box;background:linear-gradient(#ffffff,#fbfbfa 60%,#ecebe6)"></div>
<svg class="a" style="left:1036px;top:687px" width="20" height="20" viewBox="1036 687 20 20"><defs><linearGradient id="rg" x1="0" y1="0" x2="0" y2="1"><stop offset="0" stop-color="#f2733a"/><stop offset="1" stop-color="#e2451c"/></linearGradient></defs><path d="M1039 692.2L1041.4 689.9 1045.5 694 1049.6 689.9 1052 692.2 1047.9 696.5 1052 700.8 1049.6 703.1 1045.5 699 1041.4 703.1 1039 700.8 1043.1 696.5z" fill="url(#rg)" stroke="#f03fc0" stroke-width="0.8" stroke-linejoin="round"/></svg>
<div id="t92" class="a t " style="left:1055.04px;top:691px;letter-spacing:-0.442px;">Mégsem</div>
<div class="a" style="left:7px;top:717px;width:1110px;height:1px;background:#d7d7d7;"></div>
<div class="a" style="left:7px;top:718px;width:1110px;height:18px;background:#f0f0f0;"></div>
<div id="t93" class="a t " style="left:8.58px;top:720px;font-size:12px;line-height:16px;color:#111;letter-spacing:-0.297px;">PgUp/PgDn - Lapok közti váltás; F1 - Súgó; F2 - Törzsadat; ENTER - Rögzít; ESC - Mégsem</div>
<svg class="a" style="left:1104px;top:725px" width="12" height="10" viewBox="0 0 12 10"><rect x="9" y="1" width="2" height="2" fill="#b8b8b8"/><rect x="6" y="4" width="2" height="2" fill="#b8b8b8"/><rect x="9" y="4" width="2" height="2" fill="#b8b8b8"/><rect x="3" y="7" width="2" height="2" fill="#b8b8b8"/><rect x="6" y="7" width="2" height="2" fill="#b8b8b8"/><rect x="9" y="7" width="2" height="2" fill="#b8b8b8"/></svg>
</body></html>
